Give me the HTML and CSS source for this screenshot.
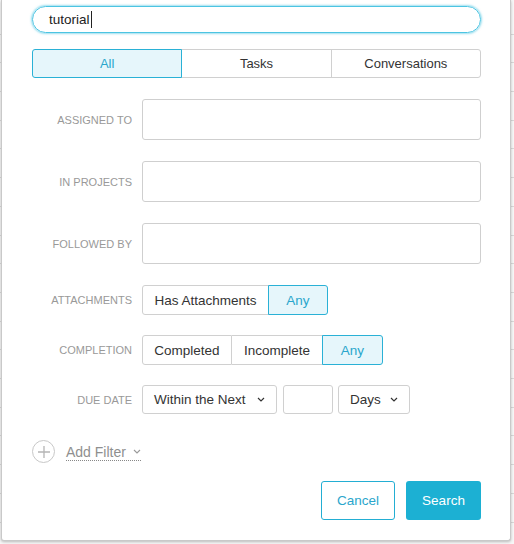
FILE: index.html
```html
<!DOCTYPE html>
<html>
<head>
<meta charset="utf-8">
<link rel="stylesheet" href="styles.css">
</head>
<body>
<div class="panel">
  <div class="search"><span class="query">tutorial</span><span class="caret"></span></div>

  <div class="tabs">
    <div class="tab active">All</div>
    <div class="tab">Tasks</div>
    <div class="tab">Conversations</div>
  </div>

  <div class="row row-input">
    <div class="label">ASSIGNED TO</div>
    <div class="field"></div>
  </div>
  <div class="row row-input">
    <div class="label">IN PROJECTS</div>
    <div class="field"></div>
  </div>
  <div class="row row-input">
    <div class="label">FOLLOWED BY</div>
    <div class="field"></div>
  </div>

  <div class="row row-seg first-seg">
    <div class="label">ATTACHMENTS</div>
    <div class="seg">
      <div class="seg-btn w-has">Has Attachments</div>
      <div class="seg-btn sel w-any1">Any</div>
    </div>
  </div>
  <div class="row row-seg">
    <div class="label">COMPLETION</div>
    <div class="seg">
      <div class="seg-btn w-comp">Completed</div>
      <div class="seg-btn w-inc">Incomplete</div>
      <div class="seg-btn sel w-any2">Any</div>
    </div>
  </div>
  <div class="row row-seg due">
    <div class="label">DUE DATE</div>
    <div class="due-controls">
      <div class="dropdown w-within">Within the Next
        <svg class="chev" width="8" height="5" viewBox="0 0 8 5"><polyline points="1,1 4,4 7,1" fill="none" stroke="#333" stroke-width="1.2"/></svg>
      </div>
      <div class="num"></div>
      <div class="dropdown w-days">Days
        <svg class="chev" width="8" height="5" viewBox="0 0 8 5"><polyline points="1,1 4,4 7,1" fill="none" stroke="#333" stroke-width="1.2"/></svg>
      </div>
    </div>
  </div>

  <div class="add-filter">
    <div class="plus">
      <svg width="14" height="14" viewBox="0 0 14 14"><path d="M7 1V13M1 7H13" stroke="#b5b5b5" stroke-width="1.3" fill="none"/></svg>
    </div>
    <div class="add-link">Add Filter
      <svg class="chev" width="8" height="5" viewBox="0 0 8 5"><polyline points="1,1 4,4 7,1" fill="none" stroke="#999" stroke-width="1.1"/></svg>
    </div>
  </div>

  <div class="actions">
    <div class="btn cancel">Cancel</div>
    <div class="btn primary">Search</div>
  </div>
</div>
</body>
</html>
```

FILE: styles.css
```css
html, body {
  margin: 0;
  padding: 0;
}
body {
  width: 514px;
  height: 544px;
  overflow: hidden;
  background-color: #f7f7f7;
  background-image: repeating-linear-gradient(to bottom, transparent 0, transparent 27.7px, #d9d9d9 27.7px, #d9d9d9 28.7px);
  background-position: 0 6px;
  font-family: "Liberation Sans", Arial, sans-serif;
  color: #333;
}
.panel {
  box-sizing: border-box;
  width: 510px;
  height: 541px;
  margin-left: 1px;
  background: #fff;
  border: 1px solid #c9c9c9;
  border-top: none;
  border-radius: 0 0 3px 3px;
  box-shadow: 0 1px 3px rgba(0,0,0,0.25);
  padding: 6px 29px 0 30px;
  display: flex;
  flex-direction: column;
}
.search {
  box-sizing: border-box;
  height: 27px;
  border: 1px solid #4cc4e2;
  border-radius: 14px;
  box-shadow: 0 0 2px 1px rgba(76,196,226,0.55);
  display: flex;
  align-items: center;
  padding-left: 16px;
  font-size: 13.5px;
  color: #222;
}
.caret {
  display: inline-block;
  width: 1px;
  height: 17px;
  background: #222;
  margin-left: 1px;
}
.tabs {
  margin-top: 16px;
  height: 29px;
  display: flex;
}
.tab {
  flex: 1;
  box-sizing: border-box;
  display: flex;
  align-items: center;
  justify-content: center;
  font-size: 13px;
  color: #333;
  border: 1px solid #d0d0d0;
  margin-left: -1px;
}
.tab:first-child {
  margin-left: 0;
  border-radius: 3px 0 0 3px;
}
.tab:last-child {
  border-radius: 0 3px 3px 0;
}
.tab.active {
  background: #e6f6fb;
  color: #2aa6cc;
  border-color: #2ab1d6;
  position: relative;
  z-index: 1;
}
.row {
  display: flex;
  align-items: center;
  gap: 10px;
}
.label {
  width: 100px;
  flex: none;
  text-align: right;
  font-size: 11px;
  color: #999;
}
.row-input {
  margin-top: 21px;
  height: 41px;
}
.field {
  flex: 1;
  height: 41px;
  box-sizing: border-box;
  border: 1px solid #cfcfcf;
  border-radius: 3px;
}
.row-seg {
  margin-top: 20px;
  height: 30px;
}
.first-seg {
  margin-top: 21px;
}
.seg {
  display: flex;
  height: 30px;
}
.seg-btn {
  box-sizing: border-box;
  height: 30px;
  display: flex;
  align-items: center;
  justify-content: center;
  font-size: 13.5px;
  color: #333;
  border: 1px solid #d0d0d0;
  border-left: none;
}
.seg-btn:first-child {
  border-left: 1px solid #d0d0d0;
  border-radius: 3px 0 0 3px;
}
.seg-btn:last-child {
  border-radius: 0 3px 3px 0;
}
.seg-btn.sel {
  background: #e6f6fb;
  color: #2aa6cc;
  border: 1px solid #2ab1d6;
  margin-left: -1px;
}
.w-has { width: 127px; }
.w-any1 { width: 60px; }
.w-comp { width: 90px; }
.w-inc { width: 91px; }
.w-any2 { width: 61px; }
.due {
  height: 29px;
}
.due-controls {
  display: flex;
  height: 29px;
}
.dropdown {
  box-sizing: border-box;
  height: 29px;
  border: 1px solid #d0d0d0;
  border-radius: 3px;
  display: flex;
  align-items: center;
  padding-left: 11px;
  font-size: 13.5px;
  color: #333;
}
.dropdown .chev {
  margin-left: auto;
}
.w-within {
  width: 135px;
  padding-right: 11px;
}
.num {
  box-sizing: border-box;
  width: 50px;
  height: 29px;
  border: 1px solid #d0d0d0;
  border-radius: 3px;
  margin-left: 6px;
  margin-right: 5px;
}
.w-days {
  width: 72px;
  padding-right: 11px;
}
.add-filter {
  margin-top: 26px;
  display: flex;
  align-items: center;
  gap: 11px;
}
.plus {
  box-sizing: border-box;
  width: 23px;
  height: 23px;
  border: 1px solid #c8c8c8;
  border-radius: 50%;
  display: flex;
  align-items: center;
  justify-content: center;
}
.add-link {
  font-size: 14px;
  color: #8f8f8f;
  border-bottom: 1px dotted #888;
  display: flex;
  align-items: center;
  gap: 7px;
  margin-top: 1px;
}
.actions {
  margin-top: 18px;
  display: flex;
  justify-content: flex-end;
  gap: 11px;
}
.btn {
  box-sizing: border-box;
  height: 39px;
  border-radius: 3px;
  display: flex;
  align-items: center;
  justify-content: center;
  font-size: 13.5px;
}
.cancel {
  width: 74px;
  border: 1px solid #23aed3;
  color: #2aa6cc;
  background: #fff;
}
.primary {
  width: 75px;
  background: #1cb0d3;
  color: #fff;
}
```
